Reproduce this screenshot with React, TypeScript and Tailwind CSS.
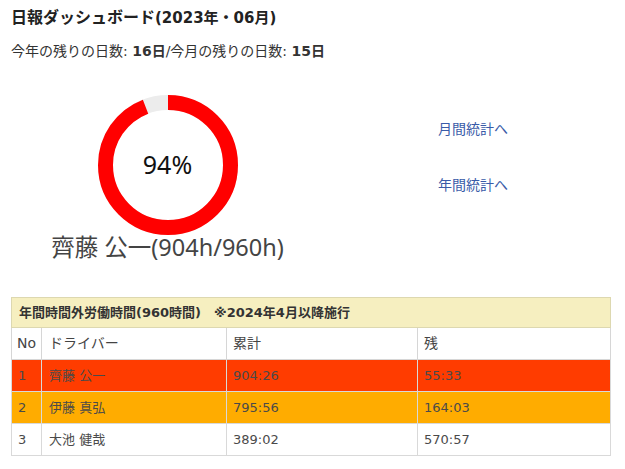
const font = "font-['DejaVu_Sans','Noto_Sans_CJK_JP',sans-serif]";

type Row = { no: number; name: string; total: string; rest: string; bg: string };

const rows: Row[] = [
  { no: 1, name: "齊藤 公一", total: "904:26", rest: "55:33", bg: "bg-[#ff3c00]" },
  { no: 2, name: "伊藤 真弘", total: "795:56", rest: "164:03", bg: "bg-[#ffac00]" },
  { no: 3, name: "大池 健哉", total: "389:02", rest: "570:57", bg: "bg-white" },
];

function Donut({ percent }: { percent: number }) {
  const r = 62.5;
  const c = 2 * Math.PI * r;
  return (
    <div className="relative w-[140px] h-[140px]">
      <svg width="140" height="140" viewBox="0 0 140 140" className="-rotate-90">
        <circle cx="70" cy="70" r={r} fill="none" stroke="#ececec" strokeWidth="15" />
        <circle
          cx="70"
          cy="70"
          r={r}
          fill="none"
          stroke="#ff0000"
          strokeWidth="15"
          strokeDasharray={`${(c * percent) / 100} ${c}`}
        />
      </svg>
      <div className="absolute inset-0 flex items-center justify-center text-[25px] text-[#111] font-['Noto_Sans',sans-serif]">
        {percent}%
      </div>
    </div>
  );
}

export default function App() {
  return (
    <div className={`${font} bg-white w-[625px] h-[469px] px-[11px] text-[#333]`}>
      <h1 className="pt-[6px] text-[16px] leading-[24px] font-bold text-[#222]">
        日報ダッシュボード<span className="text-[15px]">(2023年・06月)</span>
      </h1>
      <p className="mt-[11px] text-[14px] leading-[20px] text-[#333]">
        今年の残りの日数: <b>16日</b>/今月の残りの日数: <b>15日</b>
      </p>

      <div className="flex">
        <div className="w-[313px] flex flex-col items-center pt-[34px]">
          <Donut percent={94} />
          <div className="-mt-[2px] text-[23.5px] leading-[28px] text-[#444] font-['Noto_Sans','Noto_Sans_CJK_JP',sans-serif]">
            齊藤 公一(904h/960h)
          </div>
        </div>
        <div className="flex flex-col pl-[114px] pt-[59px] gap-[38px] text-[14px] leading-[18px] text-[#3a5ba8]">
          <a className="cursor-pointer">月間統計へ</a>
          <a className="cursor-pointer">年間統計へ</a>
        </div>
      </div>

      <table className="mt-[36px] w-[600px] border-collapse text-[13px] table-fixed">
        <colgroup>
          <col className="w-[30px]" />
          <col className="w-[185px]" />
          <col className="w-[191px]" />
          <col />
        </colgroup>
        <thead>
          <tr>
            <th
              colSpan={4}
              className="h-[30px] bg-[#f6efc0] border border-[#ddd8b0] px-[7px] text-left font-bold text-[13px] text-[#333]"
            >
              年間時間外労働時間(960時間)　※2024年4月以降施行
            </th>
          </tr>
          <tr className="text-[14px] text-[#444]">
            <td className="h-[32px] border border-[#d6d6d6] px-[5px]">No</td>
            <td className="border border-[#d6d6d6] px-[7px]">ドライバー</td>
            <td className="border border-[#d6d6d6] px-[6px]">累計</td>
            <td className="border border-[#d6d6d6] px-[6px]">残</td>
          </tr>
        </thead>
        <tbody>
          {rows.map((r) => (
            <tr key={r.no} className={`${r.bg} text-[#4a4a4a]`}>
              <td className="h-[32px] border border-[#d9d9d9] px-[6px]">{r.no}</td>
              <td className="border border-[#d9d9d9] px-[7px]">{r.name}</td>
              <td className="border border-[#d9d9d9] px-[6px]">{r.total}</td>
              <td className="border border-[#d9d9d9] px-[6px]">{r.rest}</td>
            </tr>
          ))}
        </tbody>
      </table>
    </div>
  );
}
